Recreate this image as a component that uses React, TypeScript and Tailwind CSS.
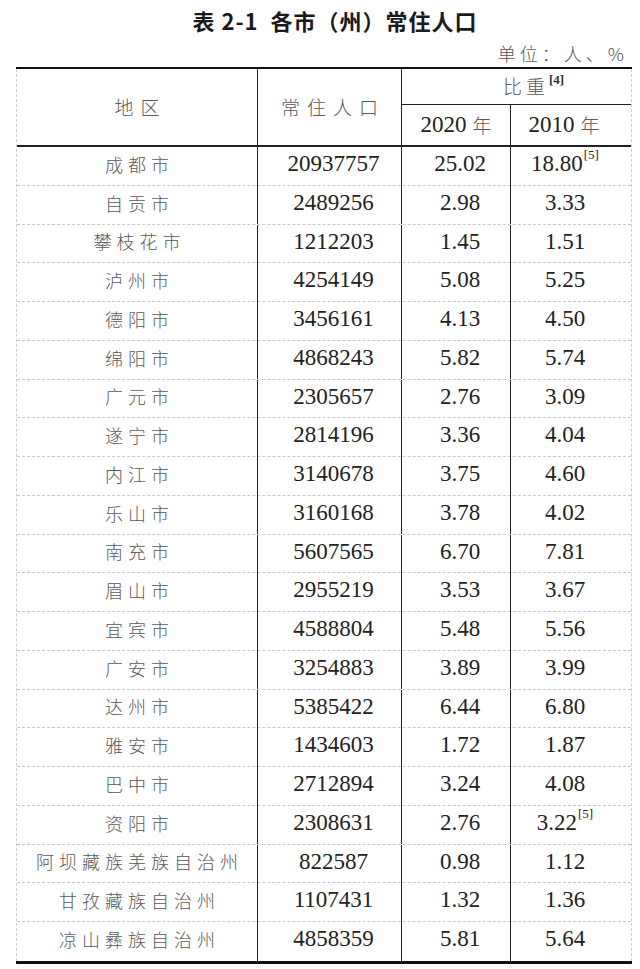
const rows: [string, string, string, string, string?][] = [
  ["成都市", "20937757", "25.02", "18.80", "[5]"],
  ["自贡市", "2489256", "2.98", "3.33"],
  ["攀枝花市", "1212203", "1.45", "1.51"],
  ["泸州市", "4254149", "5.08", "5.25"],
  ["德阳市", "3456161", "4.13", "4.50"],
  ["绵阳市", "4868243", "5.82", "5.74"],
  ["广元市", "2305657", "2.76", "3.09"],
  ["遂宁市", "2814196", "3.36", "4.04"],
  ["内江市", "3140678", "3.75", "4.60"],
  ["乐山市", "3160168", "3.78", "4.02"],
  ["南充市", "5607565", "6.70", "7.81"],
  ["眉山市", "2955219", "3.53", "3.67"],
  ["宜宾市", "4588804", "5.48", "5.56"],
  ["广安市", "3254883", "3.89", "3.99"],
  ["达州市", "5385422", "6.44", "6.80"],
  ["雅安市", "1434603", "1.72", "1.87"],
  ["巴中市", "2712894", "3.24", "4.08"],
  ["资阳市", "2308631", "2.76", "3.22", "[5]"],
  ["阿坝藏族羌族自治州", "822587", "0.98", "1.12"],
  ["甘孜藏族自治州", "1107431", "1.32", "1.36"],
  ["凉山彝族自治州", "4858359", "5.81", "5.64"],
];

const cols = "grid grid-cols-[241px_144px_109px_120px]";
const cjk = "font-['Noto_Sans_CJK_SC',sans-serif] font-light text-[#5a5a5a]";
const num = "font-['Liberation_Serif','Noto_Sans_CJK_SC',serif] text-[23px] text-[#222]";

export default function App() {
  return (
    <div className="w-[640px] h-[969px] bg-white">
      <div className="h-[40px] flex items-center justify-center pl-[30px]">
        <h1 className="font-['Noto_Sans_CJK_SC',sans-serif] font-bold text-[22px] tracking-[1px] text-[#1a1a1a] whitespace-pre">
          {"表 2-1  各市（州）常住人口"}
        </h1>
      </div>
      <div className="h-[27px] flex items-center justify-end pr-[12px]">
        <span className="font-['Noto_Sans_CJK_SC',sans-serif] font-light text-[18px] text-[#555] tracking-[4px]">
          单位：人、%
        </span>
      </div>

      <div className="ml-[16px] w-[616px] border-t-2 border-b-[3px] border-[#111]">
        <div className="border-x border-dashed border-[#cfcfcf]">
          {/* header */}
          <div className={`${cols} grid-rows-[36px_40px] border-b-2 border-[#222]`}>
            <div className={`row-span-2 border-r border-[#222] flex items-center justify-center ${cjk} text-[19px] tracking-[7px] pl-[7px]`}>
              地区
            </div>
            <div className={`row-span-2 border-r border-[#222] flex items-center justify-center ${cjk} text-[19px] tracking-[7px] pl-[7px]`}>
              常住人口
            </div>
            <div className={`col-span-2 border-b border-[#222] flex items-center justify-center pl-[34px] ${cjk} text-[19px] tracking-[4px]`}>
              比重
              <sup className="font-['Liberation_Serif',serif] font-bold text-[13px] tracking-normal text-[#333]">[4]</sup>
            </div>
            <div className={`border-r border-[#222] flex items-center justify-center ${num} text-[22px]`}>
              2020 <span className={`${cjk} text-[19px] ml-[6px]`}>年</span>
            </div>
            <div className={`flex items-center justify-center pr-[14px] ${num} text-[22px]`}>
              2010 <span className={`${cjk} text-[19px] ml-[6px]`}>年</span>
            </div>
          </div>

          {/* rows */}
          {rows.map(([name, pop, a, b, note], i) => (
            <div
              key={name}
              className={`${cols} h-[38.76px] ${i < rows.length - 1 ? "border-b border-dashed border-[#c8c8c8]" : ""}`}
            >
              <div className={`border-r border-[#222] flex items-center justify-center pb-[4px] ${cjk} text-[18px] tracking-[5px] pl-[5px]`}>
                {name}
              </div>
              <div className={`border-r border-[#222] flex items-center justify-center pb-[4px] pl-[8px] ${num}`}>
                {pop}
              </div>
              <div className={`border-r border-[#222] flex items-center justify-center pb-[4px] pl-[8px] ${num}`}>
                {a}
              </div>
              <div className={`flex items-center justify-center pb-[4px] pr-[12px] ${num}`}>
                {b}
                {note && <sup className="text-[13px] ml-[1px] -mt-[6px]">{note}</sup>}
              </div>
            </div>
          ))}
        </div>
      </div>
    </div>
  );
}
